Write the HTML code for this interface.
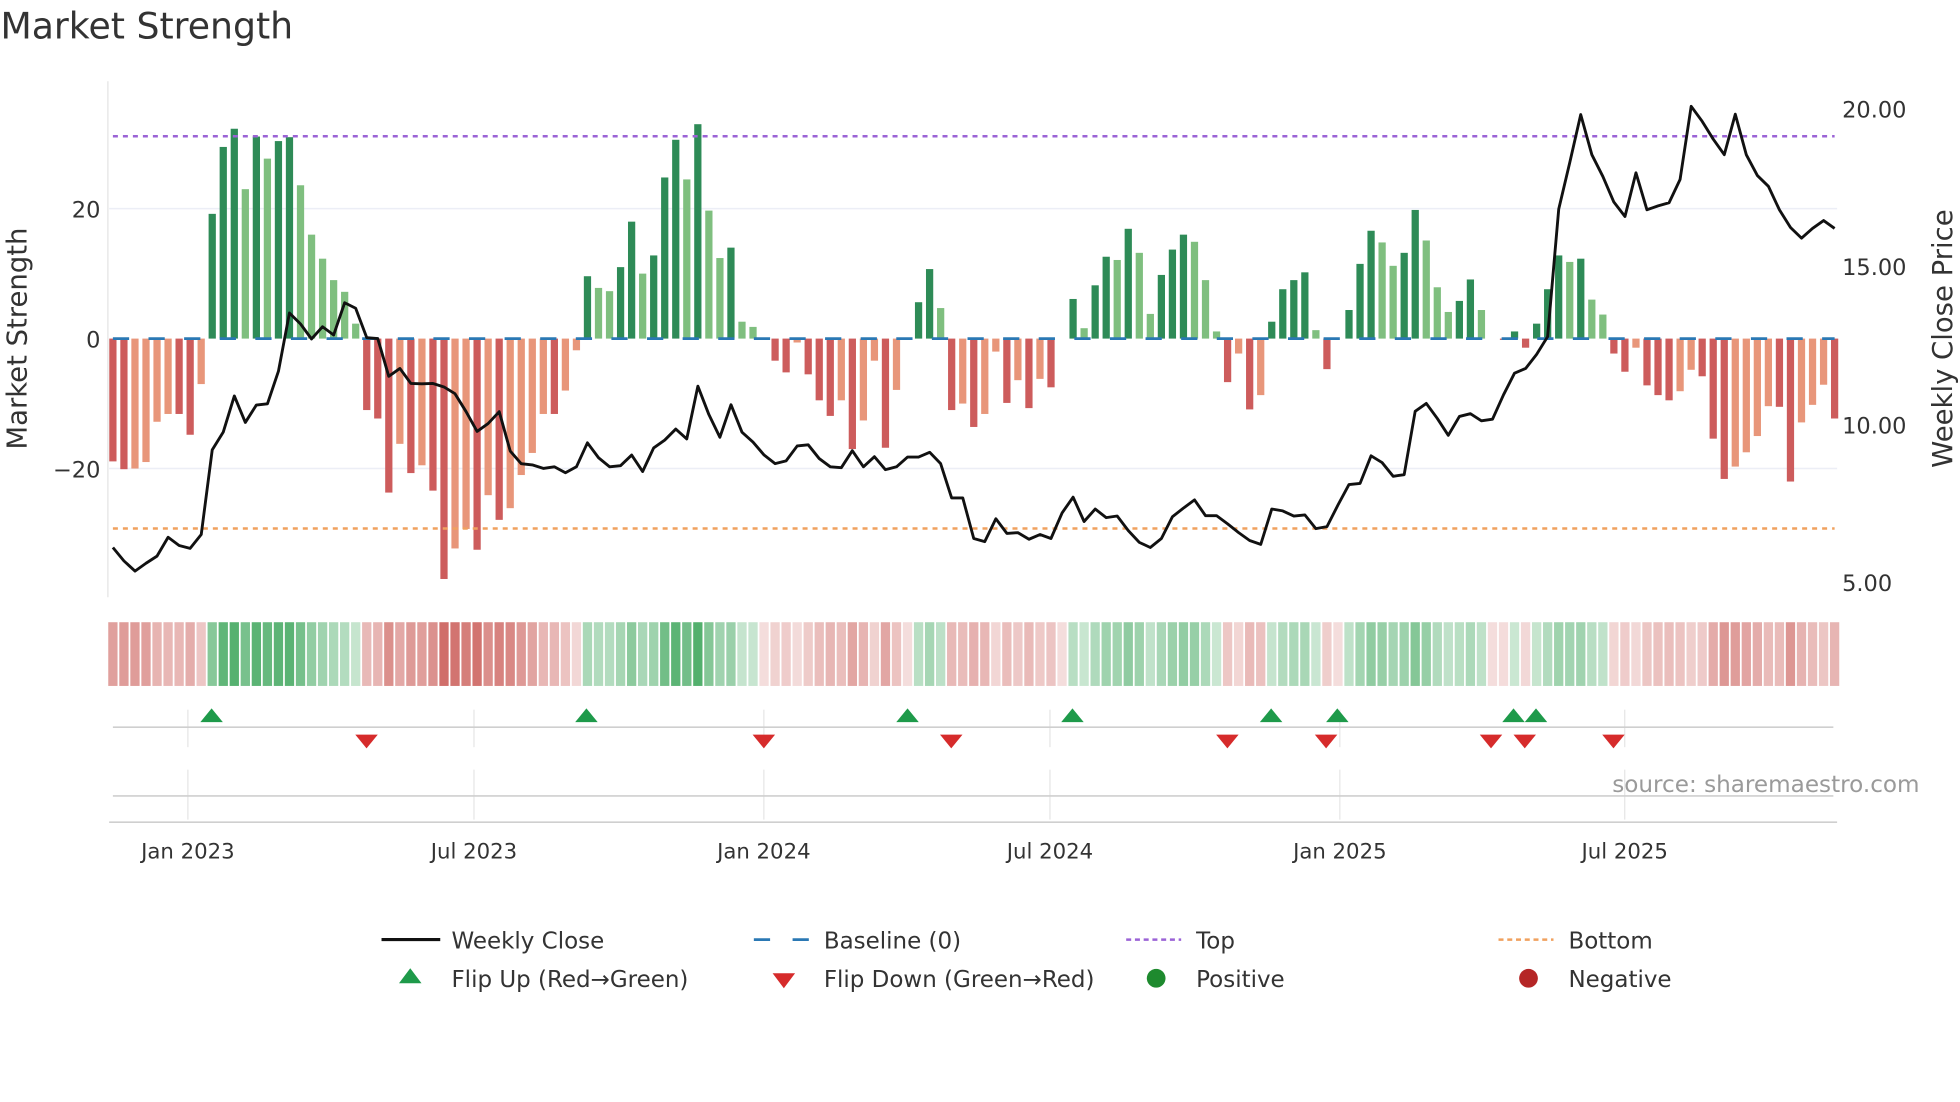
<!DOCTYPE html>
<html><head><meta charset="utf-8"><style>
html,body{margin:0;padding:0;background:#fff;}
svg{display:block;}
text{font-family:"DejaVu Sans","Liberation Sans",sans-serif;fill:#333;}
</style></head><body>
<svg id="s" width="1960" height="1102" viewBox="0 0 1568 882" xmlns="http://www.w3.org/2000/svg">
<rect width="1568" height="882" fill="#fff"/>
<text x="0" y="31" font-size="29">Market Strength</text>
<line x1="87" y1="167" x2="1470" y2="167" stroke="#eceef6" stroke-width="1.2"/>
<line x1="87" y1="375" x2="1470" y2="375" stroke="#eceef6" stroke-width="1.2"/>
<line x1="86" y1="65" x2="86" y2="478" stroke="#e4e4e4" stroke-width="1"/>
<g id="bars"></g>
<line x1="90" y1="271" x2="1468" y2="271" stroke="#2a78b4" stroke-width="2.2" stroke-dasharray="13 15.5"/>
<line x1="90" y1="109" x2="1468" y2="109" stroke="#9b63d6" stroke-width="2" stroke-dasharray="4 4"/>
<line x1="90" y1="423" x2="1468" y2="423" stroke="#f0a15e" stroke-width="2" stroke-dasharray="4 4"/>
<polyline id="price" fill="none" stroke="#111" stroke-width="2.3" stroke-linejoin="round"/>
<g font-size="18" text-anchor="end">
<text x="80" y="174">20</text><text x="80" y="278">0</text><text x="80" y="382">−20</text>
</g>
<text transform="translate(21,271) rotate(-90)" font-size="22" text-anchor="middle">Market Strength</text>
<g font-size="18">
<text x="1474" y="94">20.00</text><text x="1474" y="220">15.00</text><text x="1474" y="347">10.00</text><text x="1474" y="473">5.00</text>
</g>
<text transform="translate(1562,271) rotate(-90)" font-size="22" text-anchor="middle">Weekly Close Price</text>
<g id="heat"></g>
<g stroke="#e6e6e6" stroke-width="1">
<line x1="150" y1="568" x2="150" y2="598"/><line x1="379" y1="568" x2="379" y2="598"/><line x1="611" y1="568" x2="611" y2="598"/><line x1="840" y1="568" x2="840" y2="598"/><line x1="1072" y1="568" x2="1072" y2="598"/><line x1="1300" y1="568" x2="1300" y2="598"/>
<line x1="150" y1="616" x2="150" y2="656"/><line x1="379" y1="616" x2="379" y2="656"/><line x1="611" y1="616" x2="611" y2="656"/><line x1="840" y1="616" x2="840" y2="656"/><line x1="1072" y1="616" x2="1072" y2="656"/><line x1="1300" y1="616" x2="1300" y2="656"/>
</g>
<line x1="90" y1="582" x2="1467" y2="582" stroke="#cfcfcf" stroke-width="1.3"/>
<line x1="90" y1="637" x2="1467" y2="637" stroke="#cfcfcf" stroke-width="1.3"/>
<line x1="87" y1="658" x2="1470" y2="658" stroke="#cfcfcf" stroke-width="1.3"/>
<g id="flips"></g>
<text x="1536" y="634" font-size="18.5" text-anchor="end" style="fill:#9a9a9a">source: sharemaestro.com</text>
<g font-size="17" text-anchor="middle">
<text x="150" y="687">Jan 2023</text><text x="379" y="687">Jul 2023</text><text x="611" y="687">Jan 2024</text><text x="840" y="687">Jul 2024</text><text x="1072" y="687">Jan 2025</text><text x="1300" y="687">Jul 2025</text>
</g>
<g font-size="18.4">
<line x1="305" y1="752" x2="352" y2="752" stroke="#111" stroke-width="2.5"/><text x="361" y="759">Weekly Close</text>
<line x1="603" y1="752" x2="647" y2="752" stroke="#2a78b4" stroke-width="2.2" stroke-dasharray="13 18"/><text x="659" y="759">Baseline (0)</text>
<line x1="901" y1="752" x2="945" y2="752" stroke="#9b63d6" stroke-width="2" stroke-dasharray="4 3"/><text x="957" y="759">Top</text>
<line x1="1199" y1="752" x2="1243" y2="752" stroke="#f0a15e" stroke-width="2" stroke-dasharray="4 3"/><text x="1255" y="759">Bottom</text>
<polygon points="319,787 337,787 328,775" fill="#1e9a4a"/><text x="361" y="790">Flip Up (Red→Green)</text>
<polygon points="618,779 636,779 627,791" fill="#d62b2b"/><text x="659" y="790">Flip Down (Green→Red)</text>
<circle cx="925" cy="783" r="7.5" fill="#1e8a2e"/><text x="957" y="790">Positive</text>
<circle cx="1223" cy="783" r="7.5" fill="#b52626"/><text x="1255" y="790">Negative</text>
</g>
</svg>
<script>
var V=[-18.9,-20.1,-20,-19,-12.8,-11.6,-11.6,-14.8,-7,
19.2,29.5,32.3,23,31.1,27.7,30.4,31,23.6,16,12.3,9,7.2,2.3,
-11,-12.3,-23.7,-16.2,-20.7,-19.5,-23.4,-37,-32.3,-29.3,-32.5,-24.1,-27.9,-26.1,-21,-17.6,-11.6,-11.6,-8,-1.8,
9.6,7.8,7.3,11,18,10,12.8,24.8,30.6,24.5,33,19.7,12.4,14,2.6,1.8,
0,-3.4,-5.2,-0.6,-5.5,-9.5,-11.9,-9.5,-17,-12.6,-3.4,-16.8,-7.9,0,5.6,10.7,4.7,-11,-10,-13.6,-11.6,-2,-9.9,-6.4,-10.7,-6.2,-7.5,0,
6.1,1.6,8.2,12.6,12.1,16.9,13.2,3.8,9.8,13.7,16,14.9,9,1.1,-6.7,-2.3,-10.9,-8.7,2.6,7.6,9,10.2,1.3,-4.7,0,
4.4,11.5,16.6,14.8,11.2,13.2,19.8,15.1,7.9,4.1,5.8,9.1,4.4,0,-0.2,1.1,-1.4,2.3,7.6,12.8,11.8,12.3,6,3.7,
-2.3,-5.1,-1.4,-7.2,-8.7,-9.5,-8.1,-4.8,-5.8,-15.4,-21.6,-19.7,-17.5,-15,-10.4,-10.5,-22,-12.9,-10.2,-7.1,-12.3];
var P=[1188,1222,1248,1228,1210,1162,1183,1190,1155,940,895,803,870,826,823,740,592,620,658,627,648,566,580,655,657,753,733,771,772,771,780,797,843,893,873,843,943,975,978,987,983,998,983,922,960,983,980,953,995,935,915,887,912,778,850,908,825,895,920,953,975,968,930,
927,962,983,985,942,983,957,990,983,958,958,946,975,1062,1062,1165,1173,1115,1152,1150,1167,1155,1165,1100,1060,1122,1090,1112,1108,1145,1175,1188,1165,1110,1088,1067,1107,1107,1128,1150,1170,1180,1090,1095,1108,1105,1140,1135,1080,1028,1025,955,972,1007,1003,842,822,860,903,855,848,
866,862,800,745,733,697,652,328,210,88,190,245,310,347,236,330,320,312,253,67,105,150,190,87,190,243,270,330,375,402,377,357,377];
var N=V.length, x0=90, x1=1468, sp=(x1-x0)/(N-1), zy=271, k=5.2;
var ns="http://www.w3.org/2000/svg";
function el(t,a,p){var e=document.createElementNS(ns,t);for(var q in a)e.setAttribute(q,a[q]);p.appendChild(e);return e;}
var bars=document.getElementById('bars'),heat=document.getElementById('heat');
for(var i=0;i<N;i++){
 var v=V[i],x=x0+i*sp,pv=i>0?V[i-1]:0;
 var dark=(i==0)||(Math.sign(v)!=Math.sign(pv))||Math.abs(v)>=Math.abs(pv);
 var c;
 if(v>0)c=dark?'#2e8b57':'#7fbf7f';else c=dark?'#cd5c5c':'#e8967a';
 if(Math.abs(v)>0.05){
  var h=Math.abs(v)*k;
  el('rect',{x:x-2.9,y:v>0?zy-h:zy,width:5.8,height:h,fill:c},bars);
 }
 var t=Math.min(1,Math.abs(v)/34);
 var col;
 if(v>=0.05){var a=0.25+0.65*t;col='rgba(60,165,90,'+a+')';}
 else{var a=0.2+0.65*t;col='rgba(200,85,80,'+a+')';}
 el('rect',{x:x-sp/2+0.7,y:498,width:sp-1.4,height:51,fill:col},heat);
}
var pts=[];for(var i=0;i<P.length;i++){pts.push((x0+i*sp).toFixed(1)+','+(P[i]*0.315+64).toFixed(1));}
document.getElementById('price').setAttribute('points',pts.join(' '));
var fl=document.getElementById('flips');
[169,469,726,858,1017,1070,1211,1229].forEach(function(x){el('polygon',{points:(x-9)+',578 '+(x+9)+',578 '+x+',567',fill:'#1e9a4a'},fl);});
[293,611,761,982,1061,1193,1220,1291].forEach(function(x){el('polygon',{points:(x-9)+',588 '+(x+9)+',588 '+x+',599',fill:'#d62b2b'},fl);});
</script>
</body></html>
